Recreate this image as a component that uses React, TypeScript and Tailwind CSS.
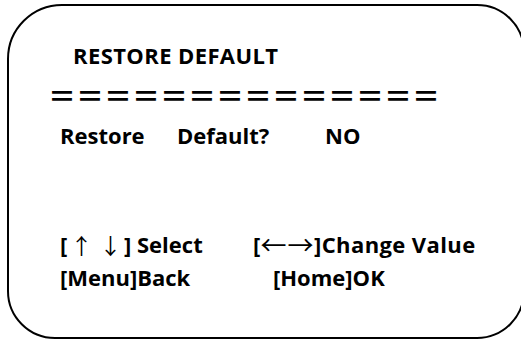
import React from 'react';

const sans = "font-['Open_Sans',_'Noto_Sans',_sans-serif]";
const cjk = "font-['Noto_Sans_CJK_SC',_sans-serif]";

export default function App() {
  return (
    <div className="w-[521px] h-[340px] overflow-hidden bg-white">
      <div
        className={`ml-[7px] mt-[4px] w-[518px] h-[335px] border-2 border-black rounded-tl-[55px] rounded-tr-[48px] rounded-br-[48px] rounded-bl-[48px] text-black ${sans} font-bold text-[22px] leading-[30px]`}>
        <div className="ml-[64px] mt-[34px] h-[30px] tracking-[0.4px]">RESTORE DEFAULT</div>
        <div className={`ml-[39px] mt-[10px] h-[30px] ${cjk} font-bold text-[28px] leading-[30px] whitespace-nowrap`}>
          ＝＝＝＝＝＝＝＝＝＝＝＝＝＝
        </div>
        <div className="ml-[51px] mt-[10px] h-[30px] flex whitespace-nowrap">
          <span className="w-[117px]">Restore</span>
          <span className="w-[148px]">Default?</span>
          <span>NO</span>
        </div>
        <div className="ml-[51px] mt-[79px] h-[30px] flex whitespace-nowrap">
          <span className="w-[193px] flex">
            <span className="w-[18px]">[</span>
            <span className={`w-[7px] ${cjk} font-normal text-[22px] flex justify-center`}>↑</span>
            <span className="w-[22px]"></span>
            <span className={`w-[7px] ${cjk} font-normal text-[22px] flex justify-center`}>↓</span>
            <span className="w-[23px] pl-[10px]">]</span>
            <span>Select</span>
          </span>
          <span className="flex">
            <span className="w-[7px]">[</span>
            <span className={`w-[27px] ${cjk} font-normal text-[26px] flex justify-center`}>←</span>
            <span className={`w-[27px] ${cjk} font-normal text-[26px] flex justify-center`}>→</span>
            <span className="tracking-[0.4px]">]Change Value</span>
          </span>
        </div>
        <div className="ml-[51px] mt-[3px] h-[30px] flex whitespace-nowrap">
          <span className="w-[213px]">[Menu]Back</span>
          <span>[Home]OK</span>
        </div>
      </div>
    </div>
  );
}
